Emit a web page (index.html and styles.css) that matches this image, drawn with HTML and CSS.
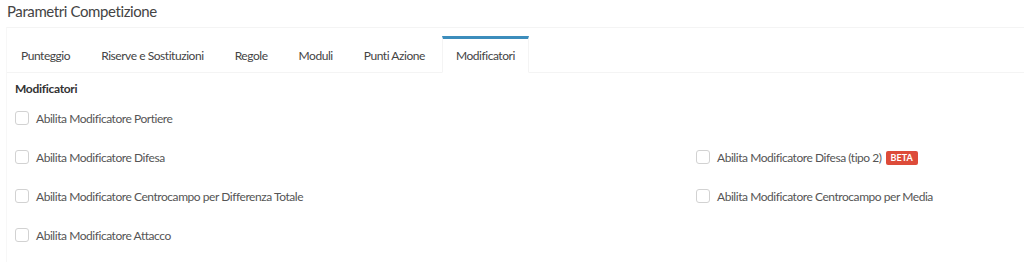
FILE: index.html
```html
<!DOCTYPE html>
<html lang="it">
<head>
	<meta charset="UTF-8">
	<title>Parametri Competizione</title>
	<link rel="stylesheet" href="styles.css">
</head>
<body>
	<div class="pageTitle">Parametri Competizione</div>
	<div class="box">
		<ul class="navTabs">
			<li>Punteggio</li>
			<li>Riserve e Sostituzioni</li>
			<li>Regole</li>
			<li>Moduli</li>
			<li>Punti Azione</li>
			<li class="active">Modificatori</li>
		</ul>
		<div class="tabPane">
			<div class="sectionLabel">Modificatori</div>
			<div class="modGrid">
				<label class="check"><span class="box14"></span>Abilita Modificatore Portiere</label>
				<div></div>
				<label class="check"><span class="box14"></span>Abilita Modificatore Difesa</label>
				<label class="check"><span class="box14"></span>Abilita Modificatore Difesa (tipo 2) <span class="badgeBeta">BETA</span></label>
				<label class="check"><span class="box14"></span>Abilita Modificatore Centrocampo per Differenza Totale</label>
				<label class="check"><span class="box14"></span>Abilita Modificatore Centrocampo per Media</label>
				<label class="check"><span class="box14"></span>Abilita Modificatore Attacco</label>
				<div></div>
			</div>
		</div>
	</div>
</body>
</html>
```

FILE: styles.css
```css
body {
  margin: 0;
  background: #fff;
  font-family: "Lato", "Noto Sans", sans-serif;
  font-size: 12px;
  letter-spacing: -0.45px;
  color: #444;
}
.pageTitle {
  font-size: 15px;
  letter-spacing: -0.4px;
  color: #444;
  padding: 0 0 0 7px;
  height: 27px;
  line-height: 22px;
}
.box {
  margin-left: 6px;
  border-top: 1px solid #f4f4f4;
  border-left: 1px solid #f7f7f7;
}
.navTabs {
  list-style: none;
  margin: 0;
  padding: 8px 0 0 0;
  display: flex;
  border-bottom: 1px solid #f4f4f4;
}
.navTabs li {
  height: 33px;
  line-height: 33px;
  padding: 0 13px;
  margin-right: 3px;
  border: 1px solid transparent;
  border-top: 3px solid transparent;
  margin-bottom: -1px;
  color: #444;
}
.navTabs li.active {
  border-color: #f4f4f4;
  border-top-color: #3c8dbc;
  border-bottom-color: #fff;
  background: #fff;
}
.tabPane {
  padding: 6px 8px 0 8px;
}
.sectionLabel {
  font-weight: bold;
  letter-spacing: -0.3px;
  color: #333;
  height: 20px;
  line-height: 20px;
  margin-bottom: 10px;
}
.modGrid {
  display: grid;
  grid-template-columns: 681px 1fr;
  grid-auto-rows: 39px;
}
.check {
  display: flex;
  align-items: flex-start;
  line-height: 20px;
  color: #555;
}
.box14 {
  width: 12px;
  height: 12px;
  border: 1px solid #d2d2d2;
  border-radius: 3px;
  margin: 2px 7px 0 0;
  flex: none;
}
.badgeBeta {
  display: inline-block;
  background: #dd4b39;
  color: #fff;
  font-size: 9px;
  font-weight: bold;
  letter-spacing: 0;
  line-height: 14px;
  padding: 0 5px;
  border-radius: 2px;
  margin: 3px 0 0 4px;
}
```
